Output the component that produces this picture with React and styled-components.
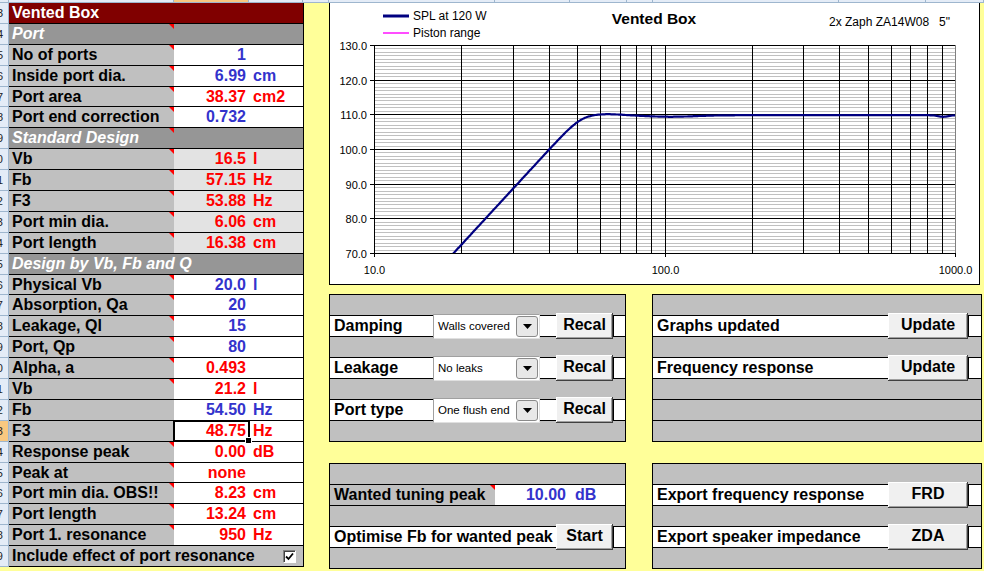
import React from 'react'
import styled, { createGlobalStyle } from 'styled-components'

const BLUE = '#3333cc'
const RED = '#ff0000'

// column header strip widths, measured off the sheet
const headerCols = [9, 165, 75, 54, 26, 166, 75, 57, 26, 186, 87, 58]

const sheet = [
  { kind: 'title', text: 'Vented Box' },
  { kind: 'section', text: 'Port', note: true },
  { label: 'No of ports', value: '1', tone: 'blue', note: true },
  { label: 'Inside port dia.', value: '6.99', unit: 'cm', tone: 'blue', note: true },
  { label: 'Port area', value: '38.37', unit: 'cm2', tone: 'red', note: true },
  { label: 'Port end correction', value: '0.732', tone: 'blue', note: true },
  { kind: 'section', text: 'Standard Design', note: true },
  { label: 'Vb', value: '16.5', unit: 'l', tone: 'red', shade: true, note: true },
  { label: 'Fb', value: '57.15', unit: 'Hz', tone: 'red', shade: true, note: true },
  { label: 'F3', value: '53.88', unit: 'Hz', tone: 'red', shade: true, note: true },
  { label: 'Port min dia.', value: '6.06', unit: 'cm', tone: 'red', shade: true, note: true },
  { label: 'Port length', value: '16.38', unit: 'cm', tone: 'red', shade: true, note: true },
  { kind: 'section', text: 'Design by Vb, Fb and Q' },
  { label: 'Physical Vb', value: '20.0', unit: 'l', tone: 'blue', note: true },
  { label: 'Absorption, Qa', value: '20', tone: 'blue', note: true },
  { label: 'Leakage, Ql', value: '15', tone: 'blue', note: true },
  { label: 'Port, Qp', value: '80', tone: 'blue', note: true },
  { label: 'Alpha, a', value: '0.493', tone: 'red', note: true },
  { label: 'Vb', value: '21.2', unit: 'l', tone: 'red', note: true },
  { label: 'Fb', value: '54.50', unit: 'Hz', tone: 'blue' },
  { label: 'F3', value: '48.75', unit: 'Hz', tone: 'red', selected: true },
  { label: 'Response peak', value: '0.00', unit: 'dB', tone: 'red', note: true },
  { label: 'Peak at', value: 'none', tone: 'red', note: true },
  { label: 'Port min dia. OBS!!', value: '8.23', unit: 'cm', tone: 'red', note: true },
  { label: 'Port length', value: '13.24', unit: 'cm', tone: 'red', note: true },
  { label: 'Port 1. resonance', value: '950', unit: 'Hz', tone: 'red', note: true },
  { kind: 'check', text: 'Include effect of port resonance' },
]

function App() {
  return (
    <Page>
      <GlobalStyle />
      <ColumnHeaders>
        {headerCols.map((w, i) => (
          <ColumnHeader key={i} $active={i === 2} style={{ width: w }} />
        ))}
      </ColumnHeaders>
      <Body>
        <RowHeaders>
          {sheet.map((r, i) => (
            <RowHeader key={i} $active={i === 20}>
              {i + 3}
            </RowHeader>
          ))}
        </RowHeaders>

        <Sheet>
          {sheet.map((r, i) => {
            if (r.kind === 'title') return <TitleRow key={i}>{r.text}</TitleRow>
            if (r.kind === 'section')
              return (
                <SectionRow key={i} $note={r.note}>
                  {r.text}
                </SectionRow>
              )
            if (r.kind === 'check')
              return (
                <CheckRow key={i}>
                  {r.text}
                  <CheckBox>
                    <svg width="9" height="9" viewBox="0 0 9 9">
                      <path d="M1 4.5 L3.5 7 L8 1.5" fill="none" stroke="#000" strokeWidth="1.8" />
                    </svg>
                  </CheckBox>
                </CheckRow>
              )
            return (
              <Row key={i}>
                <Label $note={r.note}>{r.label}</Label>
                <Num $tone={r.tone} $shade={r.shade} $selected={r.selected}>
                  {r.value}
                </Num>
                <Unit $tone={r.tone} $shade={r.shade}>
                  {r.unit}
                </Unit>
              </Row>
            )
          })}
        </Sheet>

        <RightSide>
          <ChartBox>
            <ResponseChart />
          </ChartBox>

          <Controls>
            <Panel>
              <EmptyRow />
              <FieldRow>
                <FieldLabel $w={103}>Damping</FieldLabel>
                <Combo text="Walls covered" />
                <Button $w={57} $ml={16}>Recal</Button>
                <Trail />
              </FieldRow>
              <EmptyRow />
              <FieldRow>
                <FieldLabel $w={103}>Leakage</FieldLabel>
                <Combo text="No leaks" />
                <Button $w={57} $ml={16}>Recal</Button>
                <Trail />
              </FieldRow>
              <EmptyRow />
              <FieldRow>
                <FieldLabel $w={103}>Port type</FieldLabel>
                <Combo text="One flush end" />
                <Button $w={57} $ml={16}>Recal</Button>
                <Trail />
              </FieldRow>
              <EmptyRow />
            </Panel>

            <Panel>
              <EmptyRow />
              <FieldRow>
                <FieldLabel $w={235}>Graphs updated</FieldLabel>
                <Button $w={80}>Update</Button>
                <Trail />
              </FieldRow>
              <EmptyRow />
              <FieldRow>
                <FieldLabel $w={235}>Frequency response</FieldLabel>
                <Button $w={80}>Update</Button>
                <Trail />
              </FieldRow>
              <EmptyRow />
              <EmptyRow />
              <EmptyRow />
            </Panel>

            <Panel>
              <EmptyRow />
              <FieldRow>
                <Label $note $w={165} $pad={4}>Wanted tuning peak</Label>
                <Num $tone="blue" $w={74}>10.00</Num>
                <Unit $tone="blue" $pad={6}>dB</Unit>
              </FieldRow>
              <EmptyRow />
              <FieldRow>
                <FieldLabel $w={226}>Optimise Fb for wanted peak</FieldLabel>
                <Button $w={57}>Start</Button>
                <Trail />
              </FieldRow>
              <EmptyRow />
            </Panel>

            <Panel>
              <EmptyRow />
              <FieldRow>
                <FieldLabel $w={235}>Export frequency response</FieldLabel>
                <Button $w={80}>FRD</Button>
                <Trail />
              </FieldRow>
              <EmptyRow />
              <FieldRow>
                <FieldLabel $w={235}>Export speaker impedance</FieldLabel>
                <Button $w={80}>ZDA</Button>
                <Trail />
              </FieldRow>
              <EmptyRow />
            </Panel>
          </Controls>
        </RightSide>
      </Body>
    </Page>
  )
}

function Combo({ text }) {
  return (
    <ComboBox>
      <ComboText>{text}</ComboText>
      <ComboArrow>
        <svg width="9" height="5" viewBox="0 0 9 5">
          <polygon points="0,0 9,0 4.5,5" fill="#000" />
        </svg>
      </ComboArrow>
    </ComboBox>
  )
}

// plot geometry inside the chart box (origin at x=330, y=3 on the page)
const PL = 44
const PR = 625
const PT = 42
const PB = 250
const xOf = f => PL + ((Math.log10(f) - 1) / 2) * (PR - PL)
const yOf = db => PB - ((db - 70) / 60) * (PB - PT)
const bump = (f, c, w) => Math.exp(-(((Math.log10(f) - Math.log10(c)) / w) ** 2))
// sharp-kneed high pass with a small ripple on the flat part
const spl = f =>
  109.75 +
  0.35 * bump(f, 62, 0.08) -
  0.45 * bump(f, 105, 0.12) -
  0.45 * bump(f, 910, 0.025) -
  5 * Math.log10(1 + (51.5 / f) ** 18.18)

function ResponseChart() {
  const minor = []
  const major = []
  for (let db = 70; db <= 130; db++) {
    const y = Math.round(yOf(db)) + 0.5
    if (db % 10 === 0) major.push({ db, y })
    else minor.push(y)
  }
  const freqs = []
  for (const d of [10, 100]) for (let m = 1; m <= 9; m++) freqs.push(d * m)

  const pts = []
  for (let i = 0; i <= 400; i++) {
    const f = 10 ** (1.2 + (i / 400) * 1.8)
    pts.push(`${xOf(f).toFixed(1)},${yOf(spl(f)).toFixed(1)}`)
  }

  return (
    <svg width="649" height="281" viewBox="0 0 649 281">
      <defs>
        <clipPath id="plot">
          <rect x={PL} y={PT - 2} width={PR - PL + 2} height={PB - PT + 2} />
        </clipPath>
      </defs>

      <line x1="53" y1="13" x2="79" y2="13" stroke="#000080" strokeWidth="3" />
      <ChartText x="83" y="17">SPL at 120 W</ChartText>
      <line x1="53" y1="30" x2="79" y2="30" stroke="#ff00ff" strokeWidth="1.4" />
      <ChartText x="83" y="34">Piston range</ChartText>
      <ChartTitle x="324" y="21" textAnchor="middle">Vented Box</ChartTitle>
      <ChartText x="499" y="23" style={{ whiteSpace: 'pre' }}>{'2x Zaph ZA14W08   5"'}</ChartText>

      {minor.map(y => (
        <line key={y} x1={PL} x2={PR} y1={y} y2={y} stroke="#c0c0c0" strokeWidth="1" />
      ))}
      {freqs.map(f => {
        const x = Math.round(xOf(f)) + 0.5
        return <line key={f} x1={x} x2={x} y1={PT} y2={PB} stroke="#000" strokeWidth="1" />
      })}
      <line x1={PR + 0.5} x2={PR + 0.5} y1={PT} y2={PB} stroke="#808080" strokeWidth="1" />
      {major.map(({ db, y }) => (
        <g key={db}>
          <line x1={PL - 4} x2={PR} y1={y} y2={y} stroke="#000" strokeWidth="1" />
          <AxisText x={PL - 7} y={y + 4} textAnchor="end">
            {db.toFixed(1)}
          </AxisText>
        </g>
      ))}
      {[10, 100, 1000].map(f => {
        const x = Math.round(xOf(f)) + 0.5
        return (
          <g key={f}>
            <line x1={x} x2={x} y1={PB} y2={PB + 4} stroke="#000" strokeWidth="1" />
            <AxisText x={x} y={271} textAnchor="middle">
              {f.toFixed(1)}
            </AxisText>
          </g>
        )
      })}

      <polyline
        points={pts.join(' ')}
        fill="none"
        stroke="#000080"
        strokeWidth="2.2"
        clipPath="url(#plot)"
      />
    </svg>
  )
}

export default App

const GlobalStyle = createGlobalStyle`
  html, body {
    margin: 0;
    padding: 0;
  }
  body {
    background: #ffff99;
    font-family: "Liberation Sans", Arial, sans-serif;
    overflow: hidden;
  }
`

const Page = styled.div`
  width: 984px;
  height: 571px;
  overflow: hidden;
`

const ColumnHeaders = styled.div`
  display: flex;
  height: 3px;
  border-bottom: 1px solid #9eb6ce;
  box-sizing: border-box;
`

const ColumnHeader = styled.div`
  flex: none;
  box-sizing: border-box;
  border-right: 1px solid #9eb6ce;
  background: ${p => (p.$active ? '#f8c880' : '#e4ecf7')};
`

const Body = styled.div`
  display: flex;
  align-items: flex-start;
`

const RowHeaders = styled.div`
  width: 9px;
  height: 564px;
  display: flex;
  flex-direction: column;
`

const RowHeader = styled.div`
  flex: 1;
  min-height: 0;
  display: flex;
  align-items: center;
  justify-content: flex-end;
  overflow: hidden;
  box-sizing: border-box;
  padding-right: 5px;
  border-right: 1px solid #9eb6ce;
  border-bottom: 1px solid #9eb6ce;
  background: ${p => (p.$active ? '#f8c880' : '#e4ecf7')};
  color: #222;
  font-size: 11px;
`

const Sheet = styled.div`
  width: 295px;
  height: 564px;
  flex: none;
  display: flex;
  flex-direction: column;
  box-sizing: border-box;
  border-right: 1px solid #000;
`

const Row = styled.div`
  flex: 1;
  min-height: 0;
  display: flex;
  box-sizing: border-box;
  border-bottom: 1px solid #000;
  font-size: 16px;
  font-weight: bold;
`

const TitleRow = styled(Row)`
  align-items: center;
  padding-left: 3px;
  background: #800000;
  color: #fff;
`

const Marker = `
  content: '';
  position: absolute;
  top: 0;
  border-top: 5px solid #ff0000;
  border-left: 5px solid transparent;
`

const SectionRow = styled(Row)`
  position: relative;
  align-items: center;
  padding-left: 3px;
  background: #969696;
  color: #fff;
  font-style: italic;
  white-space: nowrap;
  &::after {
    ${Marker}
    left: 160px;
    display: ${p => (p.$note ? 'block' : 'none')};
  }
`

const CheckRow = styled(Row)`
  align-items: center;
  justify-content: space-between;
  padding: 0 7px 0 3px;
  background: #c0c0c0;
  color: #000;
`

const CheckBox = styled.div`
  width: 13px;
  height: 13px;
  box-sizing: border-box;
  display: flex;
  align-items: center;
  justify-content: center;
  background: #fff;
  border: 1px solid;
  border-color: #808080 #fff #fff #808080;
  box-shadow: inset 1px 1px 0 #404040;
`

const Label = styled.div`
  position: relative;
  flex: none;
  width: ${p => p.$w || 165}px;
  display: flex;
  align-items: center;
  box-sizing: border-box;
  padding-left: ${p => p.$pad || 3}px;
  background: #c0c0c0;
  color: #000;
  font-size: 16px;
  font-weight: bold;
  white-space: nowrap;
  &::after {
    ${Marker}
    right: 0;
    display: ${p => (p.$note ? 'block' : 'none')};
  }
`

const Num = styled.div`
  position: relative;
  flex: none;
  width: ${p => p.$w || 75}px;
  display: flex;
  align-items: center;
  justify-content: flex-end;
  box-sizing: border-box;
  padding-right: 3px;
  background: ${p => (p.$shade ? '#e3e3e3' : '#fff')};
  color: ${p => (p.$tone === 'red' ? RED : BLUE)};
  font-size: 16px;
  font-weight: bold;
  z-index: ${p => (p.$selected ? 1 : 'auto')};
  outline: ${p => (p.$selected ? '2px solid #000' : 'none')};
  outline-offset: -1px;
  &::after {
    content: '';
    display: ${p => (p.$selected ? 'block' : 'none')};
    position: absolute;
    right: -3px;
    bottom: -3px;
    width: 5px;
    height: 5px;
    background: #000;
    border: 1px solid #fff;
  }
`

const Unit = styled.div`
  flex: 1;
  display: flex;
  align-items: center;
  padding-left: ${p => p.$pad || 4}px;
  background: ${p => (p.$shade ? '#e3e3e3' : '#fff')};
  color: ${p => (p.$tone === 'red' ? RED : BLUE)};
  font-size: 16px;
  font-weight: bold;
`

const RightSide = styled.div`
  margin-left: 25px;
  width: 653px;
  flex: none;
`

const ChartBox = styled.div`
  width: 651px;
  height: 282px;
  box-sizing: border-box;
  background: #fff;
  border: 1px solid #000;
  border-top: none;
  svg {
    display: block;
  }
`

const ChartText = styled.text`
  font-family: "Liberation Sans", Arial, sans-serif;
  font-size: 12px;
  fill: #000;
`

const ChartTitle = styled(ChartText)`
  font-size: 15.5px;
  font-weight: bold;
`

const AxisText = styled(ChartText)`
  font-size: 11px;
`

const Controls = styled.div`
  margin-top: 9px;
  display: grid;
  grid-template-columns: 297px 330px;
  column-gap: 26px;
  row-gap: 21px;
  align-items: start;
`

const Panel = styled.div`
  display: flex;
  flex-direction: column;
  border: 1px solid #000;
  background: #c0c0c0;
  & > div {
    height: 21px;
    box-sizing: border-box;
    border-bottom: 1px solid #000;
  }
  & > div:last-child {
    height: 20px;
    border-bottom: none;
  }
`

const EmptyRow = styled.div`
  background: #c0c0c0;
`

const FieldRow = styled.div`
  display: flex;
  align-items: stretch;
  background: #fff;
`

const FieldLabel = styled.div`
  flex: none;
  width: ${p => p.$w}px;
  display: flex;
  align-items: center;
  box-sizing: border-box;
  padding-left: 4px;
  color: #000;
  font-size: 16px;
  font-weight: bold;
  white-space: nowrap;
`

const Button = styled.div`
  position: relative;
  z-index: 1;
  flex: none;
  align-self: center;
  width: ${p => p.$w}px;
  height: 26px;
  margin-left: ${p => p.$ml || 0}px;
  display: flex;
  align-items: center;
  justify-content: center;
  box-sizing: border-box;
  background: #f0f0f0;
  box-shadow: inset -1px -1px 0 #404040, inset 1px 1px 0 #fff, inset -2px -2px 0 #a0a0a0;
  color: #000;
  font-size: 16px;
  font-weight: bold;
  padding-bottom: 2px;
`

const Trail = styled.div`
  flex: 1;
  border-left: 1px solid #000;
`

const ComboBox = styled.div`
  position: relative;
  z-index: 1;
  flex: none;
  align-self: center;
  width: 107px;
  height: 25px;
  display: flex;
  align-items: center;
  justify-content: space-between;
  box-sizing: border-box;
  padding: 0 1px 0 4px;
  background: #fff;
  border: 1px solid;
  border-color: #a0a0a0 #e0e0e0 #e0e0e0 #a0a0a0;
`

const ComboText = styled.span`
  font-size: 11.5px;
  color: #000;
  white-space: nowrap;
`

const ComboArrow = styled.div`
  width: 22px;
  height: 21px;
  display: flex;
  align-items: center;
  justify-content: center;
  box-sizing: border-box;
  background: #e8e8e8;
  border: 1px solid #8a8a8a;
  border-radius: 3px;
`
